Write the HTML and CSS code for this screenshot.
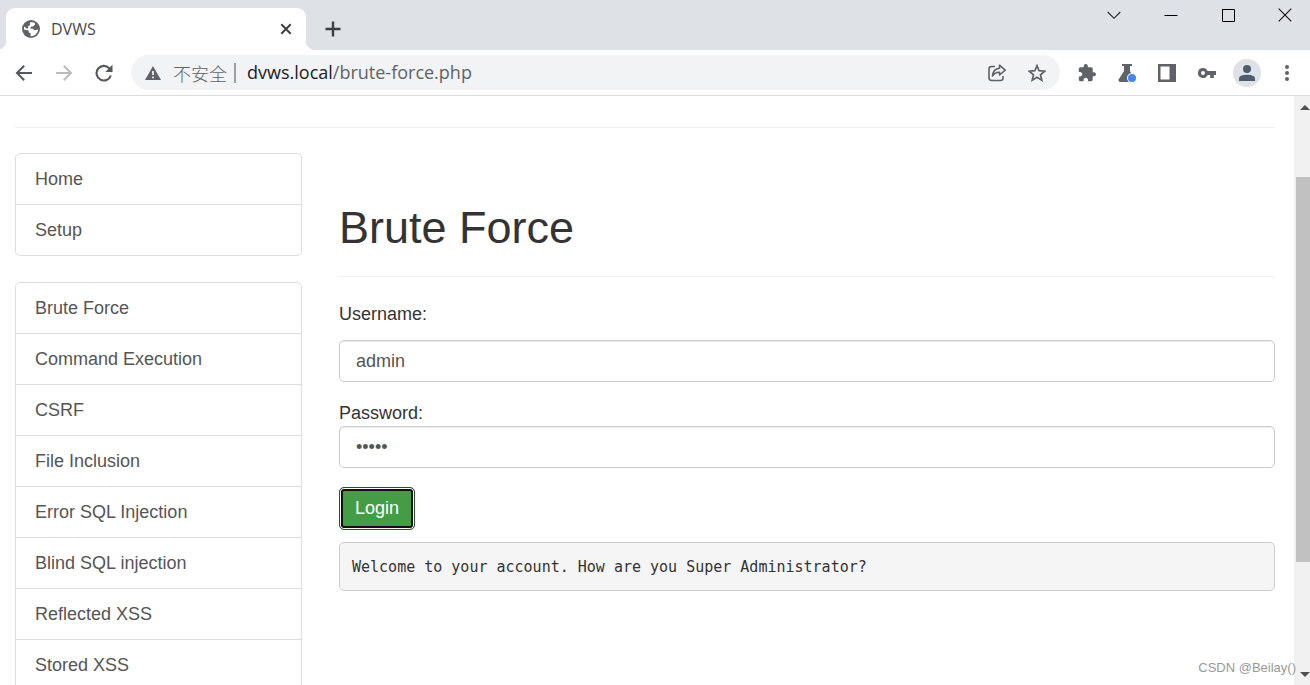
FILE: index.html
```html
<!DOCTYPE html>
<html lang="en">
<head>
<meta charset="utf-8">
<title>DVWS</title>
<link rel="stylesheet" href="styles.css">
</head>
<body>
<header class="browser">
  <div class="tabstrip">
    <div class="tab">
      <svg class="globe" width="18" height="18" viewBox="0 0 18 18" aria-hidden="true"><circle cx="9" cy="9" r="9" fill="#5f6368"/><path d="M8 2.2 12.5 2.6 13.1 4.6 11.4 6.3 8.8 6.7 8.4 8.4 11 8.7 12.4 10.3 16.2 9.6A7.2 7.2 0 0 1 8.6 16.2L8.7 13.4 6.9 12.6 6.6 10.6 1.9 9.4A7.2 7.2 0 0 1 2.3 6.6L4.6 8.6 6.4 8.2 5.9 6.3 8 5.2Z" fill="#fff"/></svg>
      <span class="tab-title">DVWS</span>
      <button class="icon-btn tab-close" aria-label="Close tab"><svg width="12" height="12" viewBox="0 0 12 12"><path d="M1.3 1.3 10.7 10.7M10.7 1.3 1.3 10.7" stroke="#3c4043" stroke-width="2"/></svg></button>
    </div>
    <button class="icon-btn new-tab" aria-label="New tab"><svg width="16" height="16" viewBox="0 0 16 16"><path d="M8 .5V15.500M.5 8H15.500" stroke="#3c4043" stroke-width="2.400"/></svg></button>
    <div class="window-controls">
      <button class="icon-btn" aria-label="Search tabs"><svg width="14" height="14" viewBox="0 0 14 14" fill="none"><path d="M.7 4 7 10.300 13.300 4" stroke="#222" stroke-width="1.100"/></svg></button>
      <button class="icon-btn" aria-label="Minimize"><svg width="14" height="14" viewBox="0 0 14 14"><path d="M.5 7.500H13.500" stroke="#000"/></svg></button>
      <button class="icon-btn" aria-label="Maximize"><svg width="14" height="14" viewBox="0 0 14 14" fill="none"><path d="M1 1.500H13.500V13.500H1.500V1" stroke="#000"/></svg></button>
      <button class="icon-btn" aria-label="Close"><svg width="14" height="14" viewBox="0 0 14 14"><path d="M.7.7 13.300 13.300M13.300.7.7 13.300" stroke="#111" stroke-width="1.100"/></svg></button>
    </div>
  </div>
  <div class="toolbar">
    <div class="nav-buttons">
      <button class="icon-btn" aria-label="Back"><svg width="18" height="18" viewBox="0 0 18 18" fill="none"><path d="M17 9H2.500M9.200 1.800 2 9 9.200 16.200" stroke="#54575b" stroke-width="2"/></svg></button>
      <button class="icon-btn" aria-label="Forward"><svg width="18" height="18" viewBox="0 0 18 18" fill="none"><path d="M1 9H15.500M8.800 1.800 16 9 8.800 16.200" stroke="#babcbe" stroke-width="2"/></svg></button>
      <button class="icon-btn" aria-label="Reload"><svg width="18" height="18" viewBox="0 0 18 18" fill="none"><path d="M15.800 11.500A7.300 7.300 0 1 1 14.200 4.200L15.500 5.700" stroke="#54575b" stroke-width="2.100"/><path d="M17.500.8V8H10.300Z" fill="#54575b"/></svg></button>
    </div>
    <div class="omnibox">
      <svg width="16" height="14" viewBox="0 0 16 14" aria-hidden="true"><path d="M8 0 16 14H0Z" fill="#5f6368"/><path d="M8 5V9M8 10.500V12.200" stroke="#fff" stroke-width="1.600"/></svg>
      <span class="insecure" lang="zh-CN">不安全</span>
      <span class="divider"></span>
      <div class="url"><span class="host">dvws.local</span>/brute-force.php</div>
      <button class="icon-btn" aria-label="Share"><svg width="18" height="18" viewBox="0 0 18 18" fill="none" stroke="#5f6368" stroke-width="1.600" stroke-linejoin="round"><path d="M7 2.500H3.500Q1 2.500 1 5V13.500Q1 16.500 3.500 16.500H12.500Q15 16.500 15 14V12"/><path d="M11.500 1.200 17.200 6.200 11.500 11V8.200Q7 8 4.500 12 5 5 11.500 4.200Z"/></svg></button>
      <button class="icon-btn" aria-label="Bookmark"><svg width="18" height="18" viewBox="0 0 18 18" fill="none"><path d="M9 1.600 11.100 6.700 16.700 7.200 12.500 10.800 13.800 16.200 9 13.300 4.200 16.200 5.500 10.800 1.300 7.200 6.900 6.700Z" stroke="#5f6368" stroke-width="1.700"/></svg></button>
    </div>
    <div class="extensions">
      <button class="icon-btn" aria-label="Extensions"><svg width="18" height="18" viewBox="1 1 22 22"><path fill="#5f6368" d="M20.500 11H19V7c0-1.100-.9-2-2-2h-4V3.500a2.500 2.500 0 0 0-5 0V5H4c-1.100 0-2 .9-2 2v3.800h1.500c1.500 0 2.700 1.200 2.700 2.700S5 16.200 3.500 16.200H2V20c0 1.100.9 2 2 2h3.800v-1.500c0-1.500 1.200-2.700 2.700-2.700s2.700 1.200 2.700 2.700V22H17c1.100 0 2-.9 2-2v-4h1.500a2.500 2.500 0 0 0 0-5z"/></svg></button>
      <button class="icon-btn" aria-label="Experiments"><svg width="18" height="18" viewBox="0 0 18 18"><path d="M4 0H14V2H12V7L17.500 16 16.500 18H1.500L.3 16 6 7V2H4Z" fill="#5f6368"/><circle cx="14" cy="14" r="5" fill="#fff"/><circle cx="14" cy="14" r="4" fill="#4285f4"/></svg></button>
      <button class="icon-btn" aria-label="Side panel"><svg width="18" height="18" viewBox="0 0 18 18"><path d="M0 0H18V18H0ZM2.500 2.500V15.500H11.500V2.500Z" fill="#5f6368" fill-rule="evenodd"/></svg></button>
      <button class="icon-btn" aria-label="Passwords"><svg width="18" height="18" viewBox="0 0 18 18"><path d="M5 4A5 5 0 1 0 9.600 11H12.200V14H15.800V11H18V7H9.600A5 5 0 0 0 5 4ZM5 7A2 2 0 1 1 5 11 2 2 0 0 1 5 7Z" fill="#5f6368" fill-rule="evenodd"/></svg></button>
      <button class="icon-btn avatar" aria-label="Profile"><svg width="16" height="16" viewBox="0 0 16 16" fill="#4f5b70"><circle cx="8" cy="4" r="4"/><path d="M0 16V13.500Q0 9.800 8 9.800T16 13.500V16Z"/></svg></button>
      <button class="icon-btn" aria-label="Menu"><svg width="18" height="18" viewBox="0 0 18 18" fill="#5f6368"><circle cx="9" cy="3" r="2"/><circle cx="9" cy="9" r="2"/><circle cx="9" cy="15" r="2"/></svg></button>
    </div>
  </div>
</header>
<div class="viewport">
  <div class="page">
    <hr class="rule">
    <div class="columns">
      <nav class="sidebar">
        <div class="list-group">
          <a href="#">Home</a>
          <a href="#">Setup</a>
        </div>
        <div class="list-group">
          <a href="#">Brute Force</a>
          <a href="#">Command Execution</a>
          <a href="#">CSRF</a>
          <a href="#">File Inclusion</a>
          <a href="#">Error SQL Injection</a>
          <a href="#">Blind SQL injection</a>
          <a href="#">Reflected XSS</a>
          <a href="#">Stored XSS</a>
        </div>
      </nav>
      <main class="content">
        <h1>Brute Force</h1>
        <form class="login">
          <label class="user-label" for="username">Username:</label>
          <input class="field" id="username" type="text" value="admin">
          <label class="pass-label" for="password">Password:</label>
          <input class="field" id="password" type="password" value="admin">
          <button class="submit" type="button">Login</button>
        </form>
        <pre class="result">Welcome to your account. How are you Super Administrator?</pre>
      </main>
    </div>
  </div>
  <div class="scrollbar">
    <svg class="arrow" width="10" height="5" viewBox="0 0 10 5"><path d="M5 0 10 5H0Z" fill="#505050"/></svg>
    <div class="track"><div class="thumb"></div></div>
    <svg class="arrow" width="10" height="5" viewBox="0 0 10 5"><path d="M0 0H10L5 5Z" fill="#505050"/></svg>
  </div>
  <div class="watermark">CSDN @Beilay()</div>
</div>
</body>
</html>
```
FILE: styles.css
```css
* { box-sizing: border-box; }

body {
  margin: 0;
  height: 100vh;
  display: flex;
  flex-direction: column;
  overflow: hidden;
  background: #fff;
  color: #333;
  font: 18px/26px "Liberation Sans", Arial, sans-serif;
}

button { font: inherit; }

.icon-btn {
  display: flex;
  align-items: center;
  justify-content: center;
  padding: 0;
  border: 0;
  background: none;
}

.browser {
  flex: none;
  border-bottom: 1px solid #dadce0;
  font-family: "Open Sans", "Noto Sans CJK SC", sans-serif;
}

.tabstrip {
  display: flex;
  height: 50px;
  padding: 8px 0 0 6px;
  background: #dee1e6;
}

.tab {
  position: relative;
  display: flex;
  align-items: center;
  width: 300px;
  padding: 0 14px 0 16px;
  border-radius: 9px 9px 0 0;
  background: #fff;
}

.tab::before,
.tab::after {
  content: "";
  position: absolute;
  bottom: 0;
  width: 9px;
  height: 9px;
}
.tab::before {
  right: 100%;
  background: radial-gradient(circle at 0 0, transparent 9px, #fff 9px);
}
.tab::after {
  left: 100%;
  background: radial-gradient(circle at 100% 0, transparent 9px, #fff 9px);
}

.tab-title {
  flex: 1;
  margin-left: 11px;
  color: #45494d;
  font-size: 16px;
}

.new-tab { width: 54px; }

.window-controls {
  display: flex;
  align-items: flex-start;
  gap: 43px;
  margin-left: auto;
  padding-right: 18px;
}

.toolbar {
  display: flex;
  align-items: center;
  height: 45px;
  padding: 0 15px;
}

.nav-buttons {
  display: flex;
  gap: 22px;
  margin-right: 18px;
}

.omnibox {
  flex: 1;
  display: flex;
  align-items: center;
  height: 35px;
  padding: 0 14px;
  border-radius: 18px;
  background: #f1f3f4;
  color: #5f6368;
}

.insecure {
  margin-left: 12px;
  font: 300 18px/26px "Noto Sans CJK SC", sans-serif;
}

.divider {
  width: 2px;
  height: 20px;
  margin: 0 11px 0 7px;
  background: #9aa0a6;
}

.url {
  flex: 1;
  padding-bottom: 2px;
}
.host { color: #202124; }
.omnibox .icon-btn + .icon-btn { margin-left: 22px; }

.extensions {
  display: flex;
  align-items: center;
  gap: 22px;
  margin-left: 18px;
}

.avatar {
  width: 28px;
  height: 28px;
  margin: 0 -5px;
  border-radius: 50%;
  background: #dee1e6;
}

.extensions .icon-btn:last-child { margin-right: -1px; }

.viewport {
  position: relative;
  flex: 1;
  display: flex;
  min-height: 0;
}

.page {
  flex: 1;
  padding: 0 19px 0 15px;
  overflow: hidden;
}

.rule {
  margin: 31px 0 25px;
  border: 0;
  border-top: 1px solid #eee;
}

.columns {
  display: grid;
  grid-template-columns: 287fr 936fr;
  column-gap: 37px;
}

.list-group {
  margin-bottom: 26px;
  border: 1px solid #ddd;
  border-radius: 5px;
}

.list-group a {
  display: block;
  padding: 12px 19px;
  color: #555;
  text-decoration: none;
}

.list-group a + a { border-top: 1px solid #ddd; }

.content { padding-top: 50px; }

h1 {
  margin: 0 0 24px;
  padding-bottom: 23px;
  border-bottom: 1px solid #eee;
  font-size: 45px;
  font-weight: 400;
  line-height: 50px;
}

.login {
  display: flex;
  flex-direction: column;
  align-items: flex-start;
}

.user-label { margin-bottom: 13px; }
.pass-label { margin-top: 18px; }

.field {
  width: 100%;
  height: 42px;
  padding: 0 16px;
  border: 1px solid #ccc;
  border-radius: 5px;
  background: #fff;
  box-shadow: inset 0 1px 1px rgba(0, 0, 0, .08);
  color: #555;
  font: inherit;
}

.submit {
  margin: 19px 0 12px;
  padding: 7px 15px 8px;
  border: 1px solid #255625;
  border-radius: 5px;
  background: #449d44;
  box-shadow: inset 0 0 0 1px #fff, inset 0 0 0 3px #101010;
  color: #fff;
}

.result {
  margin: 0;
  padding: 13px 12px 11px;
  border: 1px solid #ccc;
  border-radius: 5px;
  background: #f5f5f5;
  font: 15px/23px "DejaVu Sans Mono", monospace;
}

.scrollbar {
  display: flex;
  flex-direction: column;
  width: 16px;
  padding: 9px 0 8px 2px;
  background: #f1f1f1;
}

.arrow { align-self: center; margin-left: 3px; }

.track {
  flex: 1;
  display: flex;
  flex-direction: column;
  padding: 3px 0;
}

.track::before { content: ""; flex: 64; }
.track::after { content: ""; flex: 107; }

.thumb {
  flex: 384;
  background: #c1c1c1;
}

.watermark {
  position: absolute;
  right: 14px;
  bottom: 7px;
  color: #999;
  font-size: 13px;
  line-height: 20px;
}
```
